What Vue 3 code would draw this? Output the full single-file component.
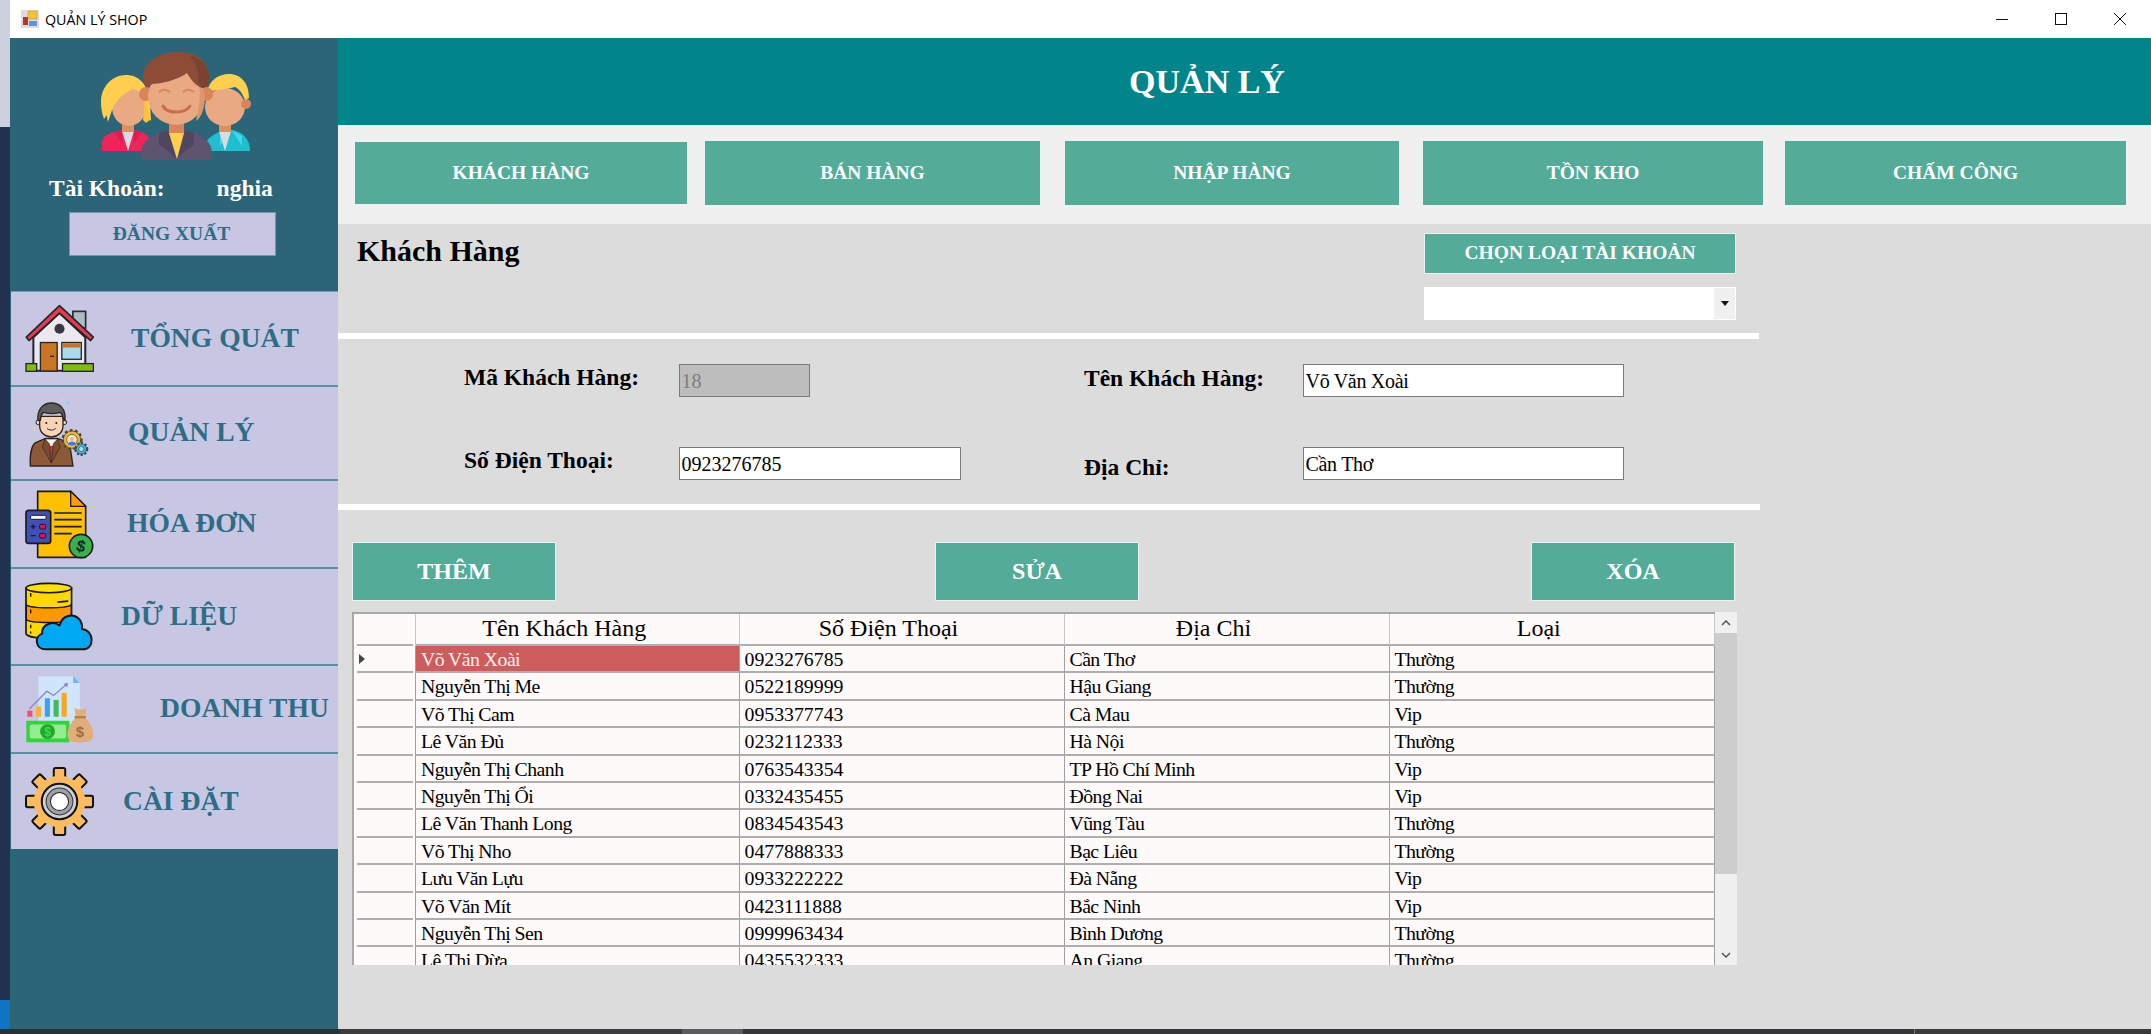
<script setup>
const tabs = ['KHÁCH HÀNG', 'BÁN HÀNG', 'NHẬP HÀNG', 'TỒN KHO', 'CHẤM CÔNG']
const menu = [
  { k: 'home', label: 'TỔNG QUÁT', x: 37, h: 95 },
  { k: 'boss', label: 'QUẢN LÝ', x: 34, h: 94 },
  { k: 'bill', label: 'HÓA ĐƠN', x: 33, h: 88 },
  { k: 'data', label: 'DỮ LIỆU', x: 27, h: 97 },
  { k: 'money', label: 'DOANH THU', x: 66, h: 88 },
  { k: 'gear', label: 'CÀI ĐẶT', x: 29, h: 95 }
]
const rows = [
  ['Võ Văn Xoài', '0923276785', 'Cần Thơ', 'Thường'],
  ['Nguyễn Thị Me', '0522189999', 'Hậu Giang', 'Thường'],
  ['Võ Thị Cam', '0953377743', 'Cà Mau', 'Vip'],
  ['Lê Văn Đủ', '0232112333', 'Hà Nội', 'Thường'],
  ['Nguyễn Thị Chanh', '0763543354', 'TP Hồ Chí Minh', 'Vip'],
  ['Nguyễn Thị Ổi', '0332435455', 'Đồng Nai', 'Vip'],
  ['Lê Văn Thanh Long', '0834543543', 'Vũng Tàu', 'Thường'],
  ['Võ Thị Nho', '0477888333', 'Bạc Liêu', 'Thường'],
  ['Lưu Văn Lựu', '0933222222', 'Đà Nẵng', 'Vip'],
  ['Võ Văn Mít', '0423111888', 'Bắc Ninh', 'Vip'],
  ['Nguyễn Thị Sen', '0999963434', 'Bình Dương', 'Thường'],
  ['Lê Thị Dừa', '0435532333', 'An Giang', 'Thường']
]
const teeth = [0, 45, 90, 135, 180, 225, 270, 315]
</script>

<template>
  <div class="screen">
    <div class="upper">
      <div class="desktop">
        <div class="d-top"></div>
        <div class="d-mid"></div>
        <div class="d-blue"></div>
      </div>
      <div class="window">
        <div class="titlebar">
          <svg class="app-icon" viewBox="0 0 18 18">
            <rect width="18" height="18" fill="#dcdcdc" />
            <rect x="2" y="7" width="5" height="8" fill="#b8322e" />
            <rect x="7" y="1" width="9" height="8" fill="#f2c437" stroke="#b08a20" stroke-width=".5" />
            <rect x="8" y="11" width="8" height="5" fill="#5f93dc" />
          </svg>
          <span class="title">QUẢN LÝ SHOP</span>
          <div class="controls">
            <svg width="12" height="12" viewBox="0 0 12 12"><path d="M0 6.5H12" stroke="#111" stroke-width="1" /></svg>
            <svg width="12" height="12" viewBox="0 0 12 12"><rect x=".5" y=".5" width="11" height="11" fill="none" stroke="#111" /></svg>
            <svg width="12" height="12" viewBox="0 0 12 12"><path d="M0 0L12 12M12 0L0 12" stroke="#111" stroke-width="1" /></svg>
          </div>
        </div>
        <div class="body">
          <aside class="sidebar">
            <div class="profile">
              <svg class="avatar" viewBox="100 52 152 108">
                <path d="M102 151v-8c0-7 7-10 20-13h12c10 2 16 6 16 12v9z" fill="#f0245a" />
                <path d="M115 133l7-3v14zM141 133l-7-3v14z" fill="#d71f50" />
                <path d="M122 131h12l-6 20z" fill="#d6dbe6" />
                <rect x="122" y="120" width="12" height="12" fill="#d9915f" />
                <path d="M101 102c0-16 12-27 25-27 12 0 22 8 24 28l1 18-6-6-34-6-7 10c-2-5-3-11-3-17z" fill="#ffd050" />
                <ellipse cx="129" cy="107" rx="17" ry="19" fill="#e9a982" />
                <path d="M112 110c4-10 9-14 20-21l-2-8-17-1c-8 6-11 16-9 24l4 18z" fill="#ffd050" />
                <path d="M143 120l2-22 6 21-5 4z" fill="#ffc23c" />
                <path d="M204 151c0-12 10-18 22-21h6c10 2 18 8 18 21z" fill="#20bfd0" />
                <path d="M232 130l-12 3v13zM232 130l10 6v10z" fill="#46d6e8" />
                <path d="M219 131h12l-6 20z" fill="#d6dbe6" />
                <rect x="219" y="120" width="12" height="12" fill="#d9915f" />
                <ellipse cx="225" cy="107" rx="20" ry="19" fill="#e9a982" />
                <circle cx="246" cy="104" r="5" fill="#d9855a" />
                <path d="M207 92c2-12 12-18 22-18 12 0 20 9 20 24l-4 2c-3-8-6-11-10-13-8 2-20 3-28 5z" fill="#ffd050" />
                <path d="M141 160v-7c0-13 14-20 27-23h17c13 3 27 10 27 23v7z" fill="#5f5470" />
                <path d="M168 130l-9 3v12l9 6 8 8zM185 130l9 3v12l-9 6-8 8z" fill="#514660" />
                <path d="M169 133h15l-7 26z" fill="#ffd050" />
                <rect x="169" y="118" width="15" height="15" fill="#d9855a" />
                <circle cx="146" cy="94" r="7" fill="#d9855a" />
                <circle cx="206" cy="94" r="7" fill="#d9855a" />
                <ellipse cx="176" cy="97" rx="28" ry="28" fill="#e9a982" />
                <path d="M196 75c3 6 7 16 0 46 6-4 9-14 9-26z" fill="#df9470" />
                <path d="M143 78C142 62 160 52 178 52C196 52 209 60 209 78C209 84 206 88 202 88C196 86 191 80 187 73C178 80 160 84 152 84C150 87 147 87 146 86C144 84 143 81 143 78Z" fill="#8c4c36" />
                <path d="M190 56c12 2 19 10 19 22 0 6-3 10-7 10l-4-6c2-8-1-18-8-26z" fill="#7a4230" />
                <path d="M159 92c3-3 8-3 11 0M183 92c3-3 8-3 11 0" fill="none" stroke="#d9855a" stroke-width="2" />
                <path d="M163 106c4 8 22 8 27 0" fill="none" stroke="#c96d4b" stroke-width="3" stroke-linecap="round" />
              </svg>
              <div class="account"><span>Tài Khoản:</span><span class="user">nghia</span></div>
              <div class="logout">ĐĂNG XUẤT</div>
            </div>
            <nav class="menu">
              <div v-for="m in menu" :key="m.k" class="item" :style="{ height: m.h + 'px' }">
                <svg v-if="m.k === 'home'" class="icon" viewBox="75 73 206 206">
                  <rect x="218" y="95" width="38" height="50" fill="#a9bec2" stroke="#2a2a30" stroke-width="5" />
                  <path d="M100 172L178 100L255 172V272H100Z" fill="#e9e9ef" stroke="#25252b" stroke-width="6" />
                  <path d="M79 172L178 78L279 172L271 182L178 100L87 182Z" fill="#e53a50" stroke="#25252b" stroke-width="5" stroke-linejoin="round" />
                  <circle cx="178" cy="147" r="15" fill="#3b3644" />
                  <rect x="121" y="188" width="50" height="85" fill="#c97623" stroke="#25252b" stroke-width="4" />
                  <rect x="150" y="227" width="12" height="4" fill="#25252b" />
                  <rect x="185" y="188" width="58" height="50" fill="#a6dbf0" stroke="#25252b" stroke-width="4" />
                  <rect x="187" y="190" width="54" height="13" fill="#c97623" />
                  <rect x="78" y="251" width="32" height="23" fill="#82bd0a" stroke="#25252b" stroke-width="4" />
                  <rect x="187" y="251" width="92" height="23" fill="#82bd0a" stroke="#25252b" stroke-width="4" />
                </svg>
                <svg v-else-if="m.k === 'boss'" class="icon boss" viewBox="80 345 195 210">
                  <circle cx="203" cy="360" r="5" fill="#7fd3f7" />
                  <circle cx="184" cy="350" r="2.5" fill="#f5d89a" />
                  <circle cx="215" cy="412" r="3" fill="#f3b4c4" />
                  <circle cx="103" cy="440" r="4" fill="#f3d67a" />
                  <circle cx="96" cy="465" r="3" fill="#b9dc9c" />
                  <circle cx="230" cy="530" r="3" fill="#f3b4c4" />
                  <path d="M90 549c-2-34 4-62 16-70l30-13h36l20 8 18 22 8 53z" fill="#8c5a36" stroke="#2e2520" stroke-width="4" />
                  <path d="M134 468h38l-19 64z" fill="#f4f4f4" stroke="#2e2520" stroke-width="2" />
                  <path d="M147 488h12l3 38-9 14-9-14z" fill="#d2304e" />
                  <path d="M134 468l-8 24 27 48-6-58zM172 468l8 24-27 48 6-58z" fill="#7a4c2c" stroke="#2e2520" stroke-width="2" />
                  <circle cx="114" cy="418" r="7" fill="#f6d4b5" stroke="#2e2520" stroke-width="3" />
                  <circle cx="192" cy="418" r="7" fill="#f6d4b5" stroke="#2e2520" stroke-width="3" />
                  <path d="M118 400v28c0 20 16 34 35 34s35-14 35-34v-28z" fill="#f6d4b5" stroke="#2e2520" stroke-width="4" />
                  <path d="M113 412c-4-30 14-52 40-52s44 18 41 52l-7-8c0-8-4-14-8-16-18 6-36 4-50 0-6 6-8 10-9 24z" fill="#5c5c5c" stroke="#2e2520" stroke-width="4" />
                  <circle cx="138" cy="420" r="3" fill="#222" /><circle cx="168" cy="420" r="3" fill="#222" />
                  <path d="M140 436c6 7 20 7 26 0" fill="none" stroke="#2e2520" stroke-width="3" />
                  <circle cx="215" cy="470" r="27" fill="#e2b74c" stroke="#5a4a20" stroke-width="10" stroke-dasharray="8 7" />
                  <circle cx="215" cy="470" r="26" fill="#e2b74c" stroke="#3a3218" stroke-width="2" />
                  <circle cx="215" cy="470" r="16" fill="#f4e7c0" stroke="#8a6a20" stroke-width="3" />
                  <path d="M203 486c0-14 24-14 24 0z" fill="#3f7fc0" />
                  <circle cx="215" cy="468" r="6" fill="#e8b88c" />
                  <circle cx="243" cy="498" r="17" fill="#55b4d6" stroke="#2e4a5a" stroke-width="8" stroke-dasharray="6 5" />
                  <circle cx="243" cy="498" r="15" fill="#55b4d6" stroke="#2e4a5a" stroke-width="2" />
                  <circle cx="243" cy="498" r="8" fill="#9fe0f5" stroke="#2e4a5a" stroke-width="2" />
                </svg>
                <svg v-else-if="m.k === 'bill'" class="icon" viewBox="75 627 207 207">
                  <path d="M113 631H212L257 676V829H113Z" fill="#ffc000" stroke="#1b1b1f" stroke-width="5" stroke-linejoin="round" />
                  <path d="M212 631V676H257Z" fill="#ff9e00" stroke="#1b1b1f" stroke-width="4" stroke-linejoin="round" />
                  <path d="M163 696H245M163 716H245M163 737H245M163 758H215" stroke="#1b1b1f" stroke-width="5" />
                  <rect x="78" y="688" width="74" height="99" rx="8" fill="#3f51b5" stroke="#1b1b1f" stroke-width="5" />
                  <rect x="92" y="703" width="46" height="12" rx="2" fill="#f4f4f4" stroke="#1b1b1f" stroke-width="3" />
                  <path d="M92 737H107M99.500 730V744M92 764H107" stroke="#1b1b1f" stroke-width="4" />
                  <rect x="119" y="730" width="18" height="14" rx="3" fill="#e0105a" stroke="#1b1b1f" stroke-width="3" />
                  <rect x="119" y="757" width="18" height="14" rx="3" fill="#e0105a" stroke="#1b1b1f" stroke-width="3" />
                  <circle cx="243" cy="795" r="35" fill="#3cb04a" stroke="#1b1b1f" stroke-width="5" />
                  <text x="243" y="812" text-anchor="middle" class="dollar bill-d" transform="rotate(15 243 795)">$</text>
                </svg>
                <svg v-else-if="m.k === 'data'" class="icon" viewBox="75 2 206 206">
                  <path d="M78 20V155C78 165 110 170 146 170S214 165 214 155V20Z" fill="#ffd800" stroke="#161618" stroke-width="5" />
                  <path d="M79 70C90 82 200 82 213 70V114C200 126 90 126 79 114Z" fill="#ff9800" stroke="#161618" stroke-width="4" />
                  <ellipse cx="146" cy="20" rx="68" ry="14" fill="#ffe100" stroke="#161618" stroke-width="5" />
                  <path d="M92 35V46M92 84V95M92 130V140M92 150V156" stroke="#161618" stroke-width="4" />
                  <path d="M172 62L204 59" stroke="#161618" stroke-width="5" />
                  <path d="M136 203C106 203 102 165 126 156C124 128 160 116 178 132C192 84 250 98 245 142C282 146 284 203 248 203Z" fill="#00a8f4" stroke="#161618" stroke-width="6" stroke-linejoin="round" />
                </svg>
                <svg v-else-if="m.k === 'money'" class="icon" viewBox="75 284 205 205">
                  <path d="M115 288H218L238 308V430H115Z" fill="#cfe5fb" />
                  <path d="M218 288V308H238Z" fill="#69b6f6" />
                  <rect x="82" y="390" width="15" height="18" fill="#f0506a" />
                  <rect x="108" y="378" width="15" height="30" fill="#f9b02e" />
                  <rect x="134" y="353" width="15" height="55" fill="#3ba0f0" />
                  <rect x="160" y="358" width="15" height="50" fill="#40bb60" />
                  <rect x="184" y="337" width="15" height="71" fill="#f5a623" />
                  <path d="M88 385L140 332L160 345L200 310" fill="none" stroke="#8f86c9" stroke-width="4" />
                  <path d="M190 310L203 307L200 321Z" fill="#8f86c9" />
                  <rect x="79" y="420" width="128" height="64" fill="#34d140" />
                  <rect x="89" y="431" width="108" height="42" rx="6" fill="#92ee8c" />
                  <circle cx="142" cy="452" r="22" fill="#1fa82c" />
                  <text x="142" y="465" text-anchor="middle" class="dollar money-d">$</text>
                  <path d="M222 382C232 388 246 388 258 382L252 410C270 424 282 450 276 470C272 482 262 484 238 484S206 482 202 470C198 450 210 424 226 410Z" fill="#e0ae7c" />
                  <rect x="222" y="406" width="34" height="7" fill="#b87f48" />
                  <text x="238" y="468" text-anchor="middle" class="dollar bag-d">$</text>
                </svg>
                <svg v-else class="icon" viewBox="75 567 206 206">
                  <g transform="translate(178 670)">
                    <rect v-for="a in teeth" :key="a" x="-17" y="-100" width="34" height="40" rx="5" fill="#fdbb5f" stroke="#111" stroke-width="6" :transform="`rotate(${a})`" />
                    <circle r="77" fill="#fdbb5f" />
                    <circle r="53" fill="#cfcfd6" stroke="#111" stroke-width="6" />
                    <circle r="40" fill="#a0a0a8" stroke="#333" stroke-width="3" />
                    <circle r="27" fill="#fff" stroke="#222" stroke-width="3" />
                  </g>
                </svg>
                <span class="item-label" :style="{ marginLeft: m.x + 'px' }">{{ m.label }}</span>
              </div>
            </nav>
          </aside>
          <main class="main">
            <header class="header">QUẢN LÝ</header>
            <div class="tabs">
              <div v-for="t in tabs" :key="t" class="btn tab">{{ t }}</div>
            </div>
            <section class="content">
              <div class="head-row">
                <h1 class="page-title">Khách Hàng</h1>
                <div class="picker">
                  <div class="btn pick-btn">CHỌN LOẠI TÀI KHOẢN</div>
                  <div class="combo">
                    <span class="combo-arrow"><svg width="8" height="5" viewBox="0 0 8 5"><path d="M0 0H8L4 5Z" fill="#111" /></svg></span>
                  </div>
                </div>
              </div>
              <div class="rule rule-a"></div>
              <div class="form">
                <label class="lbl l1">Mã Khách Hàng:</label>
                <div class="field disabled">18</div>
                <label class="lbl l1b">Tên Khách Hàng:</label>
                <div class="field wide">Võ Văn Xoài</div>
                <label class="lbl l2">Số Điện Thoại:</label>
                <div class="field phone">0923276785</div>
                <label class="lbl l2b">Địa Chỉ:</label>
                <div class="field wide">Cần Thơ</div>
              </div>
              <div class="rule rule-b"></div>
              <div class="actions">
                <div class="btn act">THÊM</div>
                <div class="btn act">SỬA</div>
                <div class="btn act">XÓA</div>
              </div>
              <div class="grid-wrap">
                <div class="grid">
                  <div class="g-row g-head">
                    <div class="g-cell g-rh"></div>
                    <div class="g-cell">Tên Khách Hàng</div>
                    <div class="g-cell">Số Điện Thoại</div>
                    <div class="g-cell">Địa Chỉ</div>
                    <div class="g-cell">Loại</div>
                  </div>
                  <div v-for="(r, i) in rows" :key="i" class="g-row">
                    <div class="g-cell g-rh"><span v-if="i === 0" class="caret"></span></div>
                    <div v-for="(c, j) in r" :key="j" class="g-cell" :class="{ selected: i === 0 && j === 0, tight: j !== 1 }">{{ c }}</div>
                  </div>
                </div>
                <div class="scroll">
                  <svg class="sc-btn" width="10" height="6" viewBox="0 0 10 6"><path d="M1 5L5 1L9 5" fill="none" stroke="#555" stroke-width="1.500" /></svg>
                  <div class="thumb"></div>
                  <svg class="sc-btn down" width="10" height="6" viewBox="0 0 10 6"><path d="M1 1L5 5L9 1" fill="none" stroke="#555" stroke-width="1.500" /></svg>
                </div>
              </div>
            </section>
          </main>
        </div>
      </div>
    </div>
    <div class="taskbar">
      <div class="tb-a"></div>
      <div class="tb-b"></div>
      <div class="tb-c"></div>
      <div class="tb-d"></div>
      <div class="tb-e"></div>
    </div>
  </div>
</template>

<style scoped>
.screen { width: 2151px; height: 1034px; display: flex; flex-direction: column; overflow: hidden; font-family: "Liberation Serif", "Times New Roman", serif; background: #dcdcdc; }
.upper { flex: 1; display: flex; min-height: 0; }
.desktop { width: 10px; display: flex; flex-direction: column; flex: none; }
.d-top { height: 127px; background: #cdd0df; }
.d-mid { flex: 1; background: #22314f; }
.d-blue { height: 29px; background: #0f74c4; }
.window { flex: 1; display: flex; flex-direction: column; min-width: 0; }
.titlebar { height: 38px; background: #fff; display: flex; align-items: center; padding-left: 11px; flex: none; }
.app-icon { width: 18px; height: 18px; }
.title { font-family: "Open Sans", "Noto Sans", sans-serif; font-size: 14.300px; color: #000; margin-left: 6px; }
.controls { margin-left: auto; display: flex; gap: 47px; padding-right: 25px; }
.body { flex: 1; display: flex; min-height: 0; }
.sidebar { width: 328px; flex: none; background: #2c6577; display: flex; flex-direction: column; }
.profile { height: 253px; padding-top: 14px; box-sizing: border-box; flex: none; }
.avatar { display: block; width: 152px; height: 108px; margin-left: 90px; }
.account { display: flex; color: #fff; font-size: 23.500px; font-weight: 700; margin: 15px 0 0 39px; line-height: 26px; }
.user { margin-left: 52px; }
.logout { width: 207px; height: 44px; margin: 11px 0 0 59px; background: #c8c7e3; border: 1px solid #6f9bb0; box-sizing: border-box; color: #2e6d85; font-size: 19.500px; font-weight: 700; display: flex; align-items: center; justify-content: center; padding-right: 2px; }
.menu { margin-left: 1px; border-top: 1px solid #6f9bb0; }
.item { display: flex; align-items: center; background: #c8c7e3; border-bottom: 2px solid #5c8ea2; box-sizing: border-box; padding-left: 14px; }
.item:last-child { border-bottom: 0; }
.icon { width: 69px; height: 69px; flex: none; }
.boss { width: 65px; height: 70px; margin: 0 2px; }
.item-label { color: #2e6d85; font-size: 27.600px; font-weight: 700; white-space: nowrap; margin-top: -2px; }
.dollar { font-family: "Liberation Sans", sans-serif; font-weight: 700; }
.bill-d { font-size: 48px; fill: #123; }
.money-d { font-size: 36px; fill: #40d84c; }
.bag-d { font-size: 44px; fill: #a06c38; }
.main { flex: 1; min-width: 0; display: flex; flex-direction: column; }
.header { height: 87px; flex: none; background: #02858a; color: #fff; font-size: 34px; font-weight: 700; display: flex; align-items: center; justify-content: center; padding-right: 75px; box-sizing: border-box; }
.tabs { height: 99px; flex: none; background: #f0f0f0; display: flex; padding: 15px 0 0 16px; box-sizing: border-box; align-items: flex-start; }
.btn { background: #53ab98; border: 1.500px solid #e8f4f1; box-sizing: border-box; color: #fff; font-weight: 700; display: flex; align-items: center; justify-content: center; }
.tab { height: 66px; font-size: 19.500px; width: 336px; }
.tab:nth-child(1) { width: 334px; height: 64px; margin-top: 1px; }
.tab:nth-child(2) { margin-left: 16px; width: 337px; }
.tab:nth-child(3) { margin-left: 23px; }
.tab:nth-child(4) { margin-left: 22px; width: 342px; }
.tab:nth-child(5) { margin-left: 20px; width: 343px; }
.content { flex: 1; background: #dcdcdc; min-height: 0; display: flex; flex-direction: column; }
.head-row { height: 109px; flex: none; display: flex; justify-content: space-between; }
.page-title { margin: 9px 0 0 19px; font-size: 30px; font-weight: 700; color: #000; line-height: 36px; }
.picker { width: 312px; margin-right: 415px; padding-top: 9px; }
.pick-btn { height: 41px; font-size: 19.500px; padding-bottom: 2px; }
.combo { height: 33px; margin-top: 13px; background: #fff; display: flex; justify-content: flex-end; }
.combo-arrow { width: 21px; background: #f0f0f0; display: flex; align-items: center; justify-content: center; margin: 1px; }
.rule { height: 6px; flex: none; background: #fff; }
.rule-a { width: 1421px; }
.rule-b { width: 1422px; }
.form { height: 165px; box-sizing: border-box; flex: none; padding: 25px 0 0 126px; display: grid; grid-template-columns: 215px 405px 219px 321px; grid-template-rows: 33px 33px; row-gap: 50px; }
.lbl { font-size: 23.500px; font-weight: 700; color: #000; line-height: 28px; white-space: nowrap; }
.l1 { margin-top: -1px; }
.l1b { margin-top: 0; }
.l2 { margin-top: -1px; }
.l2b { margin-top: 6px; }
.field { height: 33px; width: 131px; box-sizing: border-box; background: #fff; border: 1.500px solid #7a7a7a; font-size: 20px; color: #000; display: flex; align-items: center; padding-left: 1.500px; line-height: 1; }
.field.wide { width: 321px; letter-spacing: -0.300px; }
.field.phone { width: 282px; }
.disabled { background: #bdbdbd; color: #7d7d7d; }
.actions { flex: none; display: flex; padding: 32px 0 0 14px; }
.act { width: 204px; height: 59px; font-size: 24px; }
.act:nth-child(2) { margin-left: 379px; }
.act:nth-child(3) { margin-left: 392px; }
.grid-wrap { margin: 11px 0 0 14px; height: 353px; display: flex; overflow: hidden; flex: none; width: 1385px; }
.grid { width: 1363px; flex: none; background: #fffafa; border-left: 2px solid #a8a8a8; border-top: 2px solid #a8a8a8; box-sizing: border-box; }
.g-row { display: grid; grid-template-columns: 62px 323.500px 325px 325px 325.500px; height: 27.400px; }
.g-head { height: 32px; }
.g-cell { font-size: 19.800px; line-height: 26px; color: #000; padding-left: 5px; border-right: 1px solid #a0a0a0; border-bottom: 2px solid #aeaeae; box-sizing: border-box; white-space: nowrap; overflow: hidden; }
.tight { letter-spacing: -0.550px; }
.g-rh { border-bottom: 0; background: linear-gradient(#aeaeae, #aeaeae) no-repeat center bottom / 56px 2px; }
.g-head .g-cell { font-size: 24px; line-height: 29px; padding: 0 26px 0 0; text-align: center; border-right-color: #c6c6c6; }
.selected { background: #cd5c5c; color: #fff1ee; }
.caret { display: block; width: 0; height: 0; margin: 8px 0 0 0; border-left: 6px solid #444; border-top: 5px solid transparent; border-bottom: 5px solid transparent; }
.scroll { width: 22px; flex: none; background: #f0f0f0; display: flex; flex-direction: column; align-items: center; height: 353px; }
.sc-btn { flex: none; margin: 8px 0 7px; }
.thumb { width: 100%; height: 241px; background: #cdcdcd; }
.down { margin: auto 0 7px; }
.taskbar { height: 5px; flex: none; display: flex; }
.tb-a { width: 340px; background: #25343a; }
.tb-b { width: 342px; background: #3a3c3d; }
.tb-c { width: 61px; background: #5a5c5d; }
.tb-d { width: 1171px; background: #353637; }
.tb-e { flex: 1; background: #3a3a3a; border-left: 1px solid #777; }
</style>
